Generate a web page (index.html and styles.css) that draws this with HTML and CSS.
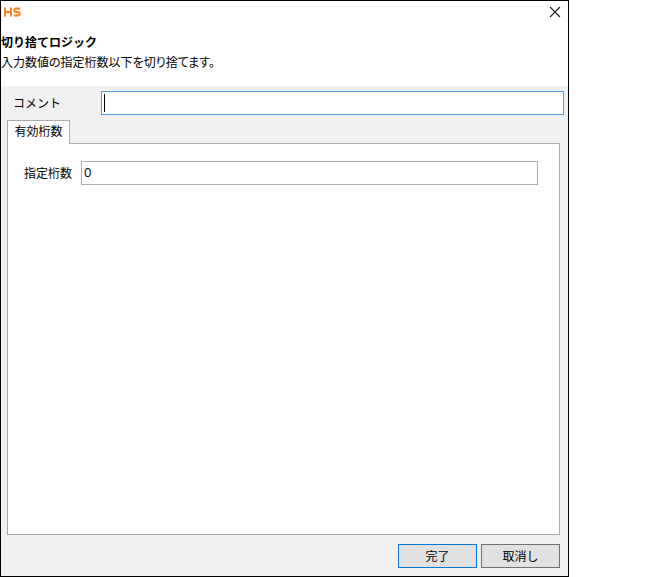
FILE: index.html
```html
<!DOCTYPE html>
<html lang="ja">
<head>
<meta charset="utf-8">
<title>切り捨てロジック</title>
<link rel="stylesheet" href="styles.css">
</head>
<body>
<main class="dialog">
  <header class="header">
    <div class="titlebar">
      <svg class="logo" viewBox="0 0 17 10" aria-hidden="true">
        <path d="M1 0.5v9M7 0.5v9M1 5h6M16 1.5h-4q-1.700 0-1.700 1.750t1.700 1.750h2q1.700 0 1.700 1.750t-1.700 1.750h-4.500"/>
      </svg>
      <button class="close" type="button" aria-label="閉じる">
        <svg viewBox="0 0 12 12" aria-hidden="true"><path d="M1 1l10 10M11 1L1 11"/></svg>
      </button>
    </div>
    <h1 class="title">切り捨てロジック</h1>
    <p class="description">入力数値の指定桁数以下を切り捨てます。</p>
  </header>
  <form class="form">
    <div class="comment-row">
      <label for="comment">コメント</label>
      <div class="comment-field">
        <input class="field field-active" id="comment" type="text">
        <span class="caret"></span>
      </div>
    </div>
    <div class="tabs" role="tablist">
      <button class="tab" type="button" role="tab" aria-selected="true">有効桁数</button>
    </div>
    <section class="panel" role="tabpanel">
      <div class="digits-row">
        <label for="digits">指定桁数</label>
        <input class="field" id="digits" type="text" value="0">
      </div>
    </section>
    <footer class="actions">
      <button class="button button-default" type="submit">完了</button>
      <button class="button" type="button">取消し</button>
    </footer>
  </form>
</main>
</body>
</html>
```
FILE: styles.css
```css
* {
  box-sizing: border-box;
}

body {
  margin: 0;
  background: #fff;
}

body,
button,
input {
  color: #000;
  font: 12px/20px "Noto Sans CJK JP", sans-serif;
}

.dialog {
  display: flex;
  flex-direction: column;
  min-height: 100vh;
  margin-right: 93px;
  border: 1px solid #000;
  background: #f0f0f0;
}

.header {
  height: 85px;
  background: #fff;
}

.titlebar {
  display: flex;
  align-items: center;
  justify-content: space-between;
  height: 22px;
  margin-bottom: 9px;
  padding: 0 7px 0 3px;
}

.logo {
  width: 17px;
  height: 10px;
  fill: none;
  stroke: #ff7f1a;
  stroke-width: 2;
}

.close {
  display: flex;
  padding: 0;
  border: 0;
  background: none;
}

.close svg {
  width: 12px;
  height: 12px;
  fill: none;
  stroke: #222;
  stroke-width: 1.1;
}

.title,
.description {
  margin: 0;
  font-size: 12px;
  line-height: 20px;
}

.title {
  font-weight: 700;
}

.description {
  font-feature-settings: "palt";
}

.form {
  display: flex;
  flex: 1;
  flex-direction: column;
  padding: 5px 8px 8px 6px;
}

.comment-row {
  display: grid;
  grid-template-columns: 88px 1fr;
  align-items: center;
  margin: 0 -4px 5px 6px;
}

.comment-field {
  position: relative;
}

.field {
  display: block;
  width: 100%;
  height: 24px;
  padding: 0 2px 2px;
  border: 1px solid #abadb3;
  border-radius: 0;
  outline: 0;
  background: #fff;
  font-family: "Open Sans", "Noto Sans CJK JP", sans-serif;
  font-size: 13px;
}

.field-active {
  border-color: #569de5;
}

.caret {
  position: absolute;
  top: 3px;
  left: 3px;
  width: 1px;
  height: 18px;
  background: #000;
}

.tabs {
  display: flex;
}

.tab {
  z-index: 1;
  width: 63px;
  height: 24px;
  margin-bottom: -1px;
  padding: 0 0 4px;
  border: 1px solid #acacac;
  border-bottom: 0;
  background: #fff;
}

.panel {
  flex: 1;
  padding: 17px 21px 17px 16px;
  border: 1px solid #acacac;
  background: #fff;
}

.digits-row {
  display: grid;
  grid-template-columns: 57px 1fr;
  align-items: center;
}

.digits-row label {
  padding-right: 9px;
  text-align: right;
}

.actions {
  display: flex;
  justify-content: flex-end;
  gap: 4px;
  padding-top: 9px;
}

.button {
  width: 79px;
  height: 24px;
  padding: 0;
  border: 1px solid #707070;
  background: #e1e1e1;
}

.button-default {
  border-color: #0078d7;
}
```
